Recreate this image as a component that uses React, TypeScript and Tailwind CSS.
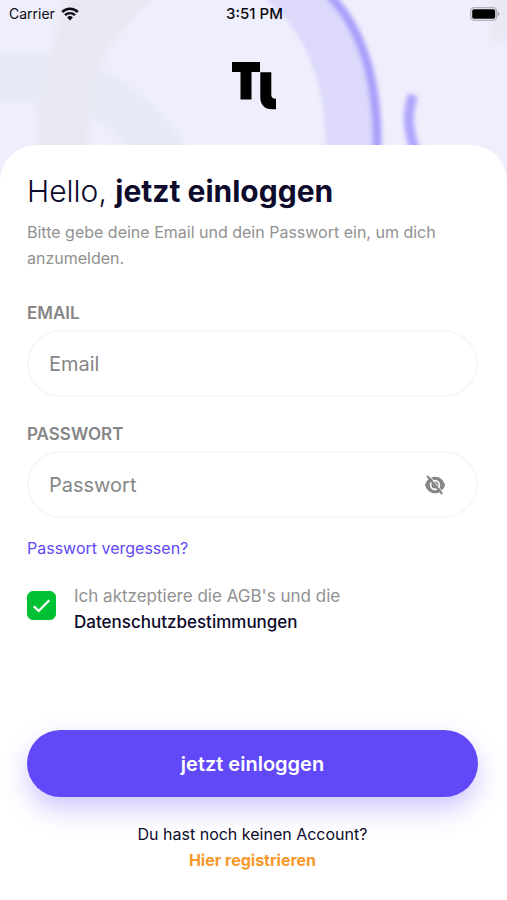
import { useState } from 'react';

function WifiIcon() {
    return (
        <svg className="w-[18px] h-[14px]" viewBox="0 0 18 14" fill="none" aria-hidden="true">
            <path d="M1.2 5a11 11 0 0 1 15.600 0" stroke="#0b0b12" strokeWidth="2.600" />
            <path d="M4 8.200a7.100 7.100 0 0 1 10 0" stroke="#0b0b12" strokeWidth="2.400" />
            <path d="M9 13.400 6.100 10.400a4.100 4.100 0 0 1 5.800 0z" fill="#0b0b12" />
        </svg>
    );
}

function BatteryIcon() {
    return (
        <svg className="w-[30px] h-[14px]" viewBox="0 0 30 14" fill="none" aria-hidden="true">
            <rect x="0.700" y="0.700" width="26" height="12.600" rx="3.600" stroke="#b3b2bb" strokeWidth="1.300" />
            <rect x="2.200" y="2.200" width="23" height="9.600" rx="1.800" fill="#000" />
            <path d="M27.800 4.800c1 .4 1.600 1.200 1.600 2.200s-.6 1.800-1.600 2.200z" fill="#a5a4ad" />
        </svg>
    );
}

function Logo() {
    return (
        <svg className="w-11 h-12" viewBox="0 0 44 48" role="img" aria-label="Logo">
            <path d="M0 0h28v10h-8.500v27.500H8.500V10H0z" fill="#000" />
            <path d="M28.300 10.300h11v22.500c0 2.500 1.500 4 4.700 4v10.500h-4c-7.500 0-11.700-4.500-11.700-12z" fill="#000" />
        </svg>
    );
}

function EyeOffIcon() {
    return (
        <svg className="w-5 h-5" viewBox="0 0 20 20" fill="none" aria-hidden="true">
            <path d="M0 10C1.500 5 5 1.700 10 1.700S18.500 5 20 10c-1.500 5-5 8.300-10 8.300S1.500 15 0 10z" fill="#868686" />
            <circle cx="10" cy="10" r="4.400" stroke="#fff" strokeWidth="1.600" />
            <circle cx="10" cy="10" r="1.500" fill="#c4c4c4" />
            <path d="M4 .300 18.800 18.200" stroke="#fff" strokeWidth="0.900" />
            <path d="M2.200.800 17.200 19" stroke="#868686" strokeWidth="2.100" />
        </svg>
    );
}

function HeaderBackdrop() {
    return (
        <svg
            className="absolute inset-0 w-full h-full"
            viewBox="0 0 507 200"
            preserveAspectRatio="xMidYMin slice"
            fill="none"
            aria-hidden="true"
        >
            <defs>
                <filter id="soft" x="-20%" y="-20%" width="140%" height="140%">
                    <feGaussianBlur stdDeviation="2" />
                </filter>
                <filter id="softer" x="-20%" y="-20%" width="140%" height="140%">
                    <feGaussianBlur stdDeviation="4" />
                </filter>
            </defs>
            <g filter="url(#softer)">
                <path d="M-20 53H40C100 58 155 95 192 156H138C105 115 65 101 30 101H-20z" fill="#e6e9f5" />
                <path d="M37 160V102C42 90 50 60 56 30L68-12H166C125 22 108 45 99 68C92 90 90 120 86 160z" fill="#e8e8f3" />
                <path d="M490-8h30v50h-30z" fill="#e9e9f4" />
            </g>
            <g filter="url(#soft)">
                <path d="M255-8C300 20 326 75 326 150H377C378 85 364 28 326-8z" fill="#dcd9fb" />
                <path d="M326-8C364 28 378 85 377 150" stroke="#aa9ffb" strokeWidth="9" />
                <path d="M413 95c-6 17-6 35 3 57" stroke="#b0a6fb" strokeWidth="10" />
            </g>
        </svg>
    );
}

export default function App() {
    const [email, setEmail] = useState('');
    const [password, setPassword] = useState('');
    const [showPassword, setShowPassword] = useState(false);
    const [accepted, setAccepted] = useState(true);

    return (
        <div className="relative min-h-screen flex flex-col bg-[#efeefc] font-['Inter',sans-serif] text-[#0d0a2c]">
            <div className="absolute inset-x-0 top-0 h-[200px] overflow-hidden">
                <HeaderBackdrop />
            </div>

            <header className="relative h-[145px]">
                <div className="grid grid-cols-3 items-center h-7 pl-[9px] pr-[7px] text-sm text-[#0b0b12]">
                    <div className="flex items-center gap-1.5">
                        <span>Carrier</span>
                        <WifiIcon />
                    </div>
                    <span className="text-center text-[15px] font-medium">3:51 PM</span>
                    <div className="flex justify-end">
                        <BatteryIcon />
                    </div>
                </div>
                <div className="flex justify-center pt-[34px]">
                    <Logo />
                </div>
            </header>

            <main className="relative flex-1 flex flex-col rounded-t-[36px] bg-white pl-[27px] pr-[29px] pt-6 pb-[27px]">
                <form className="flex-1 flex flex-col" onSubmit={(e) => e.preventDefault()}>
                    <h1 className="text-[30px] leading-[44px] font-light">
                        Hello, <strong className="font-bold">jetzt einloggen</strong>
                    </h1>
                    <p className="mt-1.5 text-base leading-[26px] text-[#919191]">
                        Bitte gebe deine Email und dein Passwort ein, um dich anzumelden.
                    </p>

                    <label htmlFor="email" className="mt-[30px] text-[17px] leading-6 font-semibold text-[#868686]">
                        EMAIL
                    </label>
                    <input
                        id="email"
                        type="email"
                        placeholder="Email"
                        value={email}
                        onChange={(e) => setEmail(e.target.value)}
                        className="mt-[5px] h-[67px] w-full rounded-full border-2 border-[#f7f7f7] bg-white px-5 text-xl outline-none placeholder:text-[#868686]"
                    />

                    <label htmlFor="password" className="mt-[25px] text-[17px] leading-6 font-semibold text-[#868686]">
                        PASSWORT
                    </label>
                    <div className="mt-[5px] flex items-center h-[67px] rounded-full border-2 border-[#f7f7f7] bg-white pl-5 pr-[31px]">
                        <input
                            id="password"
                            type={showPassword ? 'text' : 'password'}
                            placeholder="Passwort"
                            value={password}
                            onChange={(e) => setPassword(e.target.value)}
                            className="flex-1 min-w-0 text-xl outline-none placeholder:text-[#868686]"
                        />
                        <button
                            type="button"
                            aria-label="Passwort anzeigen"
                            onClick={() => setShowPassword(!showPassword)}
                        >
                            <EyeOffIcon />
                        </button>
                    </div>

                    <a href="#reset" className="mt-[17px] self-start text-base leading-[26px] text-[#6149f5]">
                        Passwort vergessen?
                    </a>

                    <div className="mt-[22px] flex items-start gap-[18px]">
                        <div className="relative mt-2 w-[29px] h-[29px] shrink-0">
                            <input
                                id="terms"
                                type="checkbox"
                                checked={accepted}
                                onChange={(e) => setAccepted(e.target.checked)}
                                className="peer block w-[29px] h-[29px] appearance-none rounded-md border border-[#00c133] checked:bg-[#00c133]"
                            />
                            <svg
                                className="absolute inset-0 w-full h-full pointer-events-none hidden peer-checked:block"
                                viewBox="0 0 29 29"
                                fill="none"
                                aria-hidden="true"
                            >
                                <path d="M6.800 15.300 11.700 20 22.300 9.200" stroke="#fff" strokeWidth="2.300" />
                            </svg>
                        </div>
                        <label htmlFor="terms" className="text-[17px] leading-[26px] text-[#919191]">
                            Ich aktzeptiere die AGB's und die
                            <br />
                            <a href="#privacy" className="font-medium text-[#0d0a2c]">Datenschutzbestimmungen</a>
                        </label>
                    </div>

                    <button
                        type="submit"
                        className="mt-auto h-[67px] w-full rounded-full bg-[#6149f8] text-xl font-semibold text-white shadow-[0_12px_26px_rgba(97,73,248,0.3)]"
                    >
                        jetzt einloggen
                    </button>
                </form>

                <p className="mt-6 text-center text-base leading-[26px]">
                    Du hast noch keinen Account?
                    <br />
                    <a href="#register" className="font-bold text-[#f7982b]">Hier registrieren</a>
                </p>
            </main>
        </div>
    );
}
